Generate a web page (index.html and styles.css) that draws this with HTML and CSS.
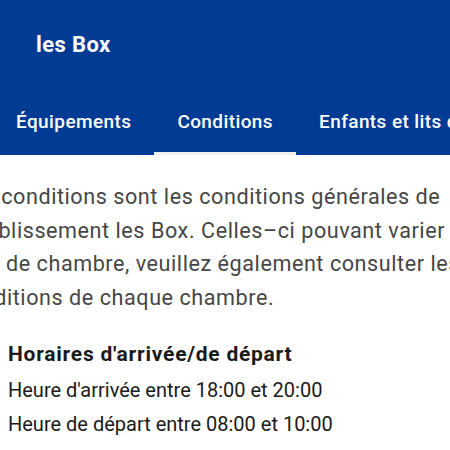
FILE: index.html
```html
<!DOCTYPE html>
<html lang="fr">
<head>
<meta charset="utf-8">
<link rel="stylesheet" href="styles.css">
</head>
<body>
<header class="appbar">
  <div class="titlebar"><h1 class="title">les Box</h1></div>
  <nav class="tabs">
    <div class="tab">Équipements</div>
    <div class="tab active">Conditions</div>
    <div class="tab">Enfants et lits d'appoint</div>
  </nav>
</header>
<main class="content">
  <p class="intro">
    <span class="line">Ces conditions sont les conditions générales de</span>
    <span class="line">l'établissement les Box. Celles–ci pouvant varier</span>
    <span class="line">type de chambre, veuillez également consulter les</span>
    <span class="line">conditions de chaque chambre.</span>
  </p>
  <section class="block">
    <h2 class="heading">Horaires d'arrivée/de départ</h2>
    <div class="row">Heure d'arrivée entre 18:00 et 20:00</div>
    <div class="row">Heure de départ entre 08:00 et 10:00</div>
  </section>
</main>
</body>
</html>
```
FILE: styles.css
```css
html, body {
  margin: 0;
  padding: 0;
  width: 450px;
  height: 450px;
  overflow: hidden;
  background: #ffffff;
  font-family: Roboto, "Noto Sans", sans-serif;
}
.appbar {
  background: #013b94;
  color: #ffffff;
  height: 155px;
  display: flex;
  flex-direction: column;
}
.titlebar {
  height: 88px;
  display: flex;
  align-items: center;
  padding-left: 36px;
}
.title {
  margin: 0;
  font-size: 22px;
  font-weight: 700;
  letter-spacing: 0.4px;
}
.tabs {
  flex: 1;
  display: flex;
  white-space: nowrap;
  margin-left: -7px;
}
.tab {
  padding: 3px 23px 0;
  height: 100%;
  box-sizing: border-box;
  display: flex;
  align-items: center;
  font-size: 19px;
  font-weight: 500;
  letter-spacing: 0.4px;
  border-bottom: 3px solid transparent;
  flex: none;
}
.tab.active {
  border-bottom-color: #f2f2f2;
}
.content {
  padding-top: 25px;
}
.intro {
  margin: 0 0 0 -43px;
  color: #464646;
  font-size: 21.6px;
  letter-spacing: 0.55px;
  line-height: 33.5px;
  white-space: nowrap;
}
.line {
  display: block;
}
.block {
  padding: 0 8px;
  margin-top: 25px;
}
.heading {
  margin: 0;
  font-size: 21px;
  font-weight: 700;
  letter-spacing: 0.75px;
  color: #1a1a1a;
  line-height: 30px;
}
.row {
  font-size: 20px;
  color: #1a1a1a;
  line-height: 34px;
}
.row:first-of-type {
  margin-top: 4px;
}
```
